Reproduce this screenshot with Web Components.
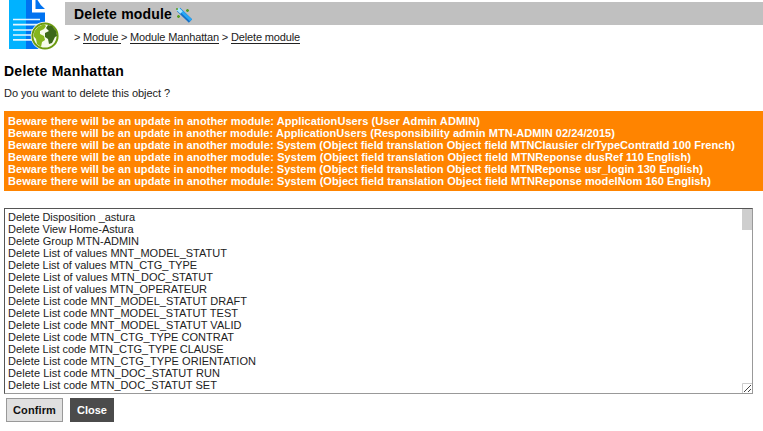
<!DOCTYPE html>
<html lang="en">
<head>
<meta charset="utf-8">
<title>Delete module</title>
<style>
html,body{margin:0;background:#fff;overflow:hidden}
body{width:763px;height:431px;font:11px/12px "Liberation Sans",Arial,sans-serif;color:#222}
</style>
</head>
<body>
<delete-page></delete-page>
<script>
// A single line of text whose tracking is set so that it spans the given width.
class TextLine extends HTMLElement {
  connectedCallback() {
    if (this.shadowRoot) return;
    this.attachShadow({mode: 'open'}).innerHTML =
      '<style>:host{display:block;white-space:pre}span{display:inline-block}:host([link]) span{text-decoration:underline;text-underline-offset:2px;text-decoration-skip-ink:none}</style><span></span>';
    const span = this.shadowRoot.querySelector('span');
    span.textContent = this.getAttribute('text');
    const w = parseFloat(this.getAttribute('width'));
    if (w) span.style.letterSpacing =
      (w - span.getBoundingClientRect().width) / span.textContent.length + 'px';
  }
}
customElements.define('text-line', TextLine);

function define(name, markup) {
  customElements.define(name, class extends HTMLElement {
    constructor() { super(); this.attachShadow({mode: 'open'}).innerHTML = markup; }
  });
}

define('document-icon', `<style>:host{display:block;width:52px;height:50px}svg{display:block}</style>
<svg width="52" height="50" viewBox="0 0 52 50">
<path d="M0 0H17V49H0Z" fill="#00b2ff"/><path d="M17 0H23V12.5H36V49H17Z" fill="#0072f0"/>
<path d="M26.5 0V9H36Q31 5 28.5 0Z" fill="#0072f0"/>
<path d="M4 19.5H31M4 24.7H31M4 30H25M4 35H24M4 39.8H24" stroke="#e4f6ff" stroke-width="1.7"/>
<circle cx="36" cy="36" r="14.3" fill="#fff"/>
<circle cx="36" cy="36" r="12.6" fill="#f7fbec" stroke="#6c9b10" stroke-width="2"/>
<path d="M25.500 31L29 27L35 24L37 26L35 29L31 31V34L35 36L36 40L33 42L32 47L28 44L27 39L24.500 36Z" fill="#85b51e"/>
<path d="M37 28L39 25L43 26L47 31L48 36L46 37L43 43L40 44L39 39L36 37L36 33L40 31Z" fill="#3d681a"/>
</svg>`);

define('wand-icon', `<style>:host{display:block;width:17px;height:17px}svg{display:block}</style>
<svg width="17" height="17" viewBox="0 0 17 17">
<path d="M2.500 2.500L14.500 14" stroke="#1470c8" stroke-width="4.600"/>
<path d="M3 2L15 13.300" stroke="#29a8f5" stroke-width="2.800"/>
<path d="M1.800 2L5.500 5.500" stroke="#a8e5ff" stroke-width="3.400"/>
<path d="M0 2H2M10 3.500H13M11.500 2V5M1 9.500H4M2.500 8V11" stroke="#579d22" stroke-width="1.400"/>
</svg>`);

define('page-header', `<style>
:host{display:flex;height:50px;padding-left:9px}
.main{flex:1;margin-left:4px}
.bar{height:23px;margin-top:2px;background:#c0c0c0;display:flex;align-items:center;padding-left:9px;gap:4px;color:#000;font:bold 14px/16px "Liberation Sans",Arial,sans-serif}
wand-icon{margin-top:3px}
nav{padding:6px 0 0 9px;display:flex;white-space:pre}
</style><document-icon></document-icon><div class="main"><div class="bar"><text-line text="Delete module" width="98"></text-line><wand-icon></wand-icon></div>
<nav><text-line text="> " width="9"></text-line><a><text-line link text="Module " width="38"></text-line></a><text-line text="> " width="9"></text-line><a><text-line link text="Module Manhattan" width="89"></text-line></a><text-line text=" > " width="12"></text-line><a><text-line link text="Delete module" width="69"></text-line></a></nav></div>`);

define('warning-panel', `<style>:host{display:block;background:#ff8400;color:#fff;font-weight:bold;padding:4px}</style><slot></slot>`);

define('log-box', `<style>
:host{display:flex;box-sizing:border-box;width:749px;height:186px;border:1px solid #999;border-top-color:#555;border-left-color:#555;background:#fff}
.text{flex:1;padding:2px 3px}
.side{width:10px;display:flex;flex-direction:column;justify-content:space-between}
.thumb{height:21px;background:#cecece}
svg{display:block}
</style><div class="text"><slot></slot></div><div class="side"><div class="thumb"></div>
<svg width="10" height="10"><path d="M.5 10V.5H10" fill="none" stroke="#ccc"/><path d="M2 9L9 2M6 9L9 6" stroke="#444"/></svg></div>`);

define('push-button', `<style>
:host{display:block;box-sizing:border-box;height:24px;padding:5px 6px;border:1px solid #999;background:#e0e0e0;color:#111;font-weight:bold}
:host([dark]){background:#4b4b4b;border-color:#4b4b4b;color:#fff}
</style><slot></slot>`);

const warnings = [
  ['ApplicationUsers (User Admin ADMIN)', 472],
  ['ApplicationUsers (Responsibility admin MTN-ADMIN 02/24/2015)', 607],
  ['System (Object field translation Object field MTNClausier clrTypeContratId 100 French)', 727],
  ['System (Object field translation Object field MTNReponse dusRef 110 English)', 683],
  ['System (Object field translation Object field MTNReponse usr_login 130 English)', 695],
  ['System (Object field translation Object field MTNReponse modelNom 160 English)', 703]];
const entries = [
  ['Disposition _astura', 127], ['View Home-Astura', 125.5], ['Group MTN-ADMIN', 131],
  ['List of values MNT_MODEL_STATUT', 219], ['List of values MTN_CTG_TYPE', 189],
  ['List of values MTN_DOC_STATUT', 205], ['List of values MTN_OPERATEUR', 199],
  ['List code MNT_MODEL_STATUT DRAFT', 239], ['List code MNT_MODEL_STATUT TEST', 230],
  ['List code MNT_MODEL_STATUT VALID', 233.5], ['List code MTN_CTG_TYPE CONTRAT', 226],
  ['List code MTN_CTG_TYPE CLAUSE', 215.5], ['List code MTN_CTG_TYPE ORIENTATION', 248],
  ['List code MTN_DOC_STATUT RUN', 212], ['List code MTN_DOC_STATUT SET', 209]];
const lines = (prefix, rows) => rows.map(([t, w]) => `<text-line text="${prefix}${t}" width="${w}"></text-line>`).join('');

define('delete-page', `<style>
:host{display:block}
main{display:flex;flex-direction:column;padding-left:4px}
.title{font:bold 14px/16px "Liberation Sans",Arial,sans-serif;color:#000;margin-top:13px}
.ask{margin:8px 0 12px}
log-box{margin-top:17px}
.actions{display:flex;gap:7px;padding:4px 0 0 2px}
</style><page-header></page-header><main>
<text-line class="title" text="Delete Manhattan" width="120"></text-line>
<text-line class="ask" text="Do you want to delete this object ?" width="166"></text-line>
<warning-panel>${lines('Beware there will be an update in another module: ', warnings)}</warning-panel>
<log-box>${lines('Delete ', entries)}</log-box>
<div class="actions"><push-button><text-line text="Confirm" width="43"></text-line></push-button><push-button dark><text-line text="Close" width="30"></text-line></push-button></div>
</main>`);
</script>
</body>
</html>
